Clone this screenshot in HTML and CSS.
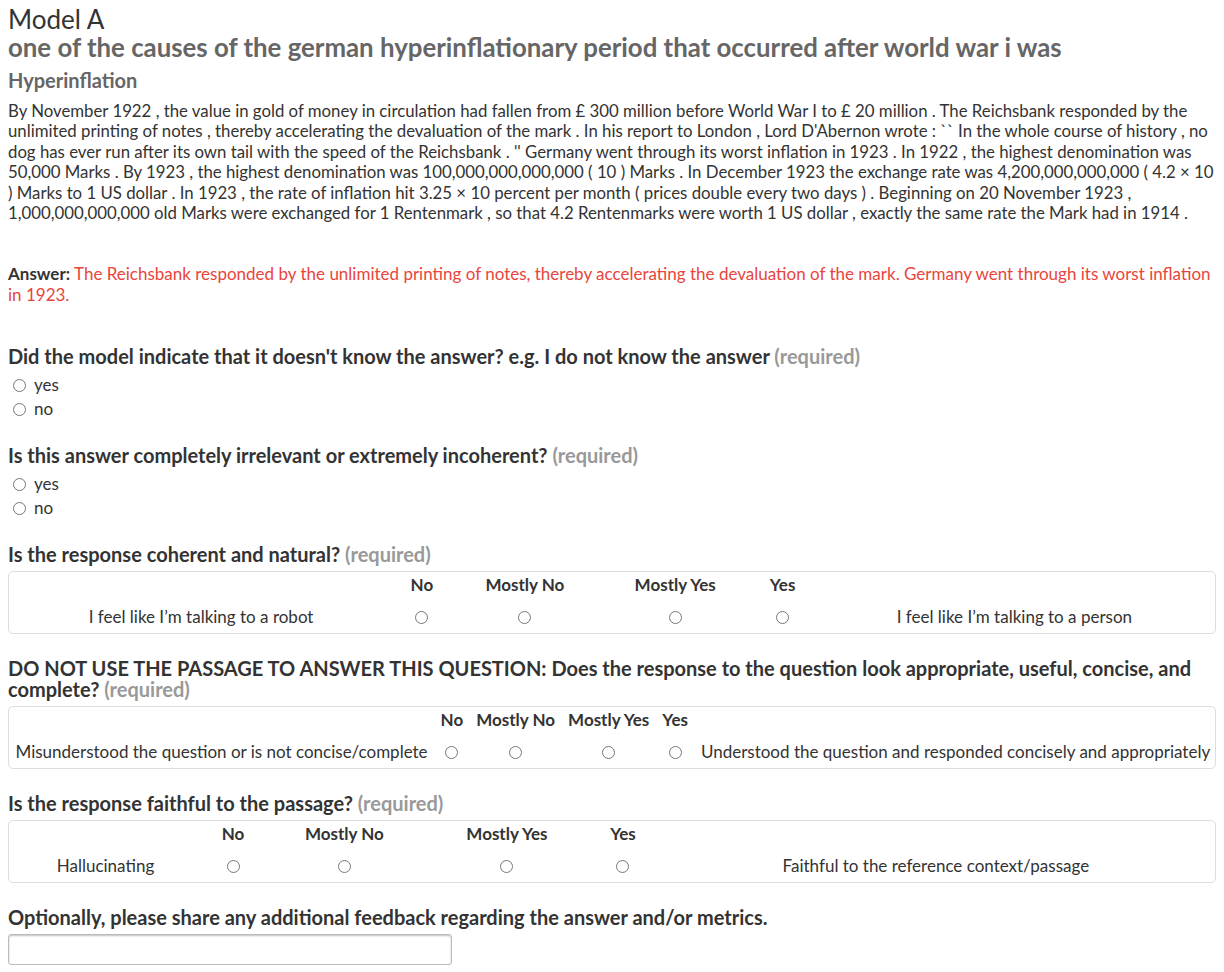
FILE: index.html
```html
<!DOCTYPE html>
<html>
<head>
<meta charset="utf-8">
<link rel="stylesheet" href="styles.css">
</head>
<body>
<div class="page">
  <h1 class="model">Model A</h1>
  <h2 class="question-title">one of the causes of the german hyperinflationary period that occurred after world war i was</h2>
  <h3 class="passage-title">Hyperinflation</h3>
  <p class="passage">By November 1922 , the value in gold of money in circulation had fallen from £ 300 million before World War I to £ 20 million . The Reichsbank responded by the unlimited printing of notes , thereby accelerating the devaluation of the mark . In his report to London , Lord D'Abernon wrote : `` In the whole course of history , no dog has ever run after its own tail with the speed of the Reichsbank . '' Germany went through its worst inflation in 1923 . In 1922 , the highest denomination was 50,000 Marks . By 1923 , the highest denomination was 100,000,000,000,000 ( 10 ) Marks . In December 1923 the exchange rate was 4,200,000,000,000 ( 4.2 × 10 ) Marks to 1 US dollar . In 1923 , the rate of inflation hit 3.25 × 10 percent per month ( prices double every two days ) . Beginning on 20 November 1923 , 1,000,000,000,000 old Marks were exchanged for 1 Rentenmark , so that 4.2 Rentenmarks were worth 1 US dollar , exactly the same rate the Mark had in 1914 .</p>

  <p class="answer"><b>Answer:</b> <span class="answer-text">The Reichsbank responded by the unlimited printing of notes, thereby accelerating the devaluation of the mark. Germany went through its worst inflation in 1923.</span></p>

  <div class="q q-first">
    <div class="q-label">Did the model indicate that it doesn't know the answer? e.g. I do not know the answer <span class="req">(required)</span></div>
    <label class="choice"><span class="radio"></span>yes</label>
    <label class="choice"><span class="radio"></span>no</label>
  </div>

  <div class="q">
    <div class="q-label">Is this answer completely irrelevant or extremely incoherent? <span class="req">(required)</span></div>
    <label class="choice"><span class="radio"></span>yes</label>
    <label class="choice"><span class="radio"></span>no</label>
  </div>

  <div class="q">
    <div class="q-label">Is the response coherent and natural? <span class="req">(required)</span></div>
    <div class="box">
      <table class="rating">
        <tr><th></th><th>No</th><th>Mostly No</th><th>Mostly Yes</th><th>Yes</th><th></th></tr>
        <tr><td>I feel like I’m talking to a robot</td><td><span class="radio"></span></td><td><span class="radio"></span></td><td><span class="radio"></span></td><td><span class="radio"></span></td><td>I feel like I’m talking to a person</td></tr>
      </table>
    </div>
  </div>

  <div class="q">
    <div class="q-label">DO NOT USE THE PASSAGE TO ANSWER THIS QUESTION: Does the response to the question look appropriate, useful, concise, and complete? <span class="req">(required)</span></div>
    <div class="box">
      <table class="rating">
        <tr><th></th><th>No</th><th>Mostly No</th><th>Mostly Yes</th><th>Yes</th><th></th></tr>
        <tr><td>Misunderstood the question or is not concise/complete</td><td><span class="radio"></span></td><td><span class="radio"></span></td><td><span class="radio"></span></td><td><span class="radio"></span></td><td>Understood the question and responded concisely and appropriately</td></tr>
      </table>
    </div>
  </div>

  <div class="q">
    <div class="q-label">Is the response faithful to the passage? <span class="req">(required)</span></div>
    <div class="box">
      <table class="rating">
        <tr><th></th><th>No</th><th>Mostly No</th><th>Mostly Yes</th><th>Yes</th><th></th></tr>
        <tr><td>Hallucinating</td><td><span class="radio"></span></td><td><span class="radio"></span></td><td><span class="radio"></span></td><td><span class="radio"></span></td><td>Faithful to the reference context/passage</td></tr>
      </table>
    </div>
  </div>

  <div class="q">
    <div class="q-label">Optionally, please share any additional feedback regarding the answer and/or metrics.</div>
    <input class="feedback" type="text">
  </div>
</div>
</body>
</html>
```
FILE: styles.css
```css
html, body {
  margin: 0;
  padding: 0;
  background: #fff;
}
body {
  font-family: Lato, "Open Sans", sans-serif;
  color: #333;
  font-size: 17px;
  line-height: 20.4px;
}
.page {
  padding: 4px 8px 8px 8px;
}
.model {
  margin: 0;
  font-size: 26px;
  line-height: 30px;
  font-weight: normal;
  color: #333;
}
.question-title {
  margin: 0;
  font-size: 25.8px;
  line-height: 26px;
  font-weight: bold;
  color: #666;
}
.passage-title {
  margin: 8px 0 0 0;
  font-size: 20px;
  line-height: 24px;
  font-weight: bold;
  color: #666;
}
.passage {
  margin: 9px 0 0 0;
  font-size: 16.8px;
  line-height: 20.4px;
}
.answer {
  margin: 41px 0 0 0;
  line-height: 20.4px;
}
.answer b {
  font-weight: bold;
  color: #333;
}
.answer-text {
  color: #e8453c;
}
.q {
  margin-top: 24px;
}
.q-first {
  margin-top: 41px;
}
.q-label {
  font-size: 20px;
  line-height: 21px;
  font-weight: bold;
  color: #333;
  margin-bottom: 6px;
}
.req {
  color: #999;
}
.choice {
  display: flex;
  align-items: center;
  gap: 8px;
  height: 24px;
  padding-left: 5px;
  font-size: 17px;
}
.radio {
  display: inline-block;
  width: 11px;
  height: 11px;
  border: 1px solid #777;
  border-radius: 50%;
  background: #fff;
  vertical-align: middle;
}
.box {
  border: 1px solid #ddd;
  border-radius: 5px;
}
.rating {
  width: 100%;
  border-collapse: collapse;
}
.rating th, .rating td {
  padding: 6px 6.5px;
  text-align: center;
  font-size: 17px;
  line-height: 20px;
  white-space: nowrap;
}
.rating th {
  font-weight: bold;
  padding-top: 3px;
  padding-bottom: 6px;
}
.rating td .radio {
  margin-top: -2px;
}
.feedback {
  display: block;
  width: 444px;
  height: 31px;
  box-sizing: border-box;
  border: 1px solid #bbb;
  border-radius: 3px;
  box-shadow: inset 0 1px 2px rgba(0,0,0,0.25);
  font-family: Lato, sans-serif;
  font-size: 16px;
}
```
